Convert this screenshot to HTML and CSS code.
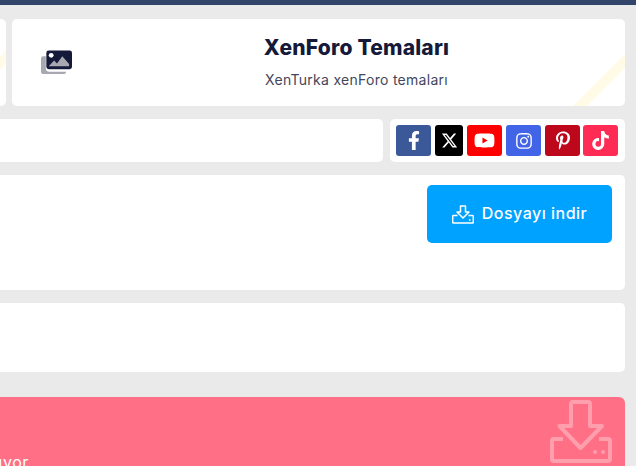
FILE: index.html
```html
<!DOCTYPE html>
<html lang="tr">
<head>
<meta charset="utf-8">
<title>XenForo Temaları</title>
<link rel="stylesheet" href="styles.css">
</head>
<body>
<div class="topbar"></div>
<main class="page">
  <section class="row row-head">
    <div class="card stub">
      <svg class="stripe" viewBox="0 0 6 87" aria-hidden="true"><polygon points="0,38 6,31 6,44 0,51" fill="#fffbe6"/></svg>
    </div>
    <div class="card head">
      <svg class="stripe" viewBox="0 0 613 87" aria-hidden="true"><polygon points="561,87 613,35 613,49 575,87" fill="#fffbe6"/></svg>
      <svg class="head-icon" width="31" height="25" viewBox="0 0 32 26" preserveAspectRatio="none" aria-hidden="true">
        <path d="M2.5 6.5H5V19a3.5 3.5 0 0 0 3.5 3.5H26a2.5 2.5 0 0 1-2.5 2.5H3a3 3 0 0 1-3-3V9a2.500 2.500 0 0 1 2.500-2.500z" fill="#a7a8b1"/>
        <rect x="5.500" y="0.500" width="26.500" height="19.500" rx="2.500" fill="#15193a"/>
        <circle cx="10.500" cy="5.500" r="2.500" fill="#fff"/>
        <path d="M8 17l5.500-6 3 3 5.500-7.500 7 8V17z" fill="#a7a8b1"/>
      </svg>
      <div class="head-text">
        <h1 class="head-title">XenForo Temaları</h1>
        <p class="head-sub">XenTurka xenForo temaları</p>
      </div>
    </div>
  </section>

  <section class="row row-social">
    <div class="card search"></div>
    <nav class="card social">
      <a class="soc soc-fb"><svg viewBox="0 0 320 512" width="12" height="19"><path fill="#fff" d="M279.14 288l14.22-92.66h-88.91v-60.13c0-25.35 12.42-50.06 52.24-50.06h40.42V6.26S260.43 0 225.36 0c-73.22 0-121.08 44.38-121.08 124.72v70.62H22.89V288h81.39v224h100.17V288z"/></svg></a>
      <a class="soc soc-x"><svg viewBox="0 0 512 512" width="17" height="17"><path fill="#fff" d="M389.2 48h70.6L305.6 224.2 487 464H345L233.7 318.6 106.5 464H35.8L200.7 275.5 26.800 48H172.400L272.900 180.900 389.200 48zM364.400 421.800h39.100L151.100 88h-42L364.400 421.800z"/></svg></a>
      <a class="soc soc-yt"><svg viewBox="0 0 576 512" width="21" height="19"><path fill="#fff" d="M549.655 124.083c-6.281-23.65-24.787-42.276-48.284-48.597C458.781 64 288 64 288 64S117.22 64 74.629 75.486c-23.497 6.322-42.003 24.947-48.284 48.597-11.412 42.867-11.412 132.305-11.412 132.305s0 89.438 11.412 132.305c6.281 23.65 24.787 41.5 48.284 47.821C117.22 448 288 448 288 448s170.78 0 213.371-11.486c23.497-6.321 42.003-24.171 48.284-47.821 11.412-42.867 11.412-132.305 11.412-132.305s0-89.438-11.412-132.305zm-317.51 213.508V175.185l142.739 81.205-142.739 81.201z"/></svg></a>
      <a class="soc soc-ig"><svg viewBox="0 0 448 512" width="16" height="18"><path fill="#fff" d="M224.1 141c-63.6 0-114.9 51.3-114.9 114.9s51.3 114.9 114.9 114.9S339 319.5 339 255.9 287.7 141 224.1 141zm0 189.6c-41.1 0-74.7-33.5-74.7-74.7s33.5-74.7 74.7-74.7 74.7 33.5 74.7 74.7-33.6 74.7-74.7 74.7zm146.4-194.3c0 14.9-12 26.8-26.8 26.8-14.9 0-26.8-12-26.8-26.8s12-26.8 26.8-26.8 26.8 12 26.8 26.8zm76.1 27.2c-1.7-35.9-9.9-67.7-36.2-93.9-26.2-26.2-58-34.4-93.9-36.2-37-2.1-147.9-2.1-184.9 0-35.8 1.7-67.6 9.9-93.9 36.1s-34.4 58-36.2 93.9c-2.1 37-2.1 147.9 0 184.9 1.7 35.9 9.9 67.7 36.2 93.9s58 34.4 93.9 36.2c37 2.1 147.9 2.1 184.9 0 35.9-1.7 67.7-9.9 93.9-36.2 26.2-26.2 34.4-58 36.2-93.9 2.1-37 2.1-147.8 0-184.8zM398.8 388c-7.8 19.6-22.9 34.7-42.6 42.6-29.5 11.7-99.5 9-132.1 9s-102.7 2.6-132.1-9c-19.6-7.8-34.7-22.9-42.6-42.6-11.7-29.5-9-99.5-9-132.1s-2.6-102.7 9-132.1c7.8-19.6 22.9-34.7 42.6-42.6 29.5-11.7 99.5-9 132.1-9s102.7-2.6 132.1 9c19.6 7.8 34.7 22.9 42.6 42.6 11.7 29.5 9 99.5 9 132.1s2.7 102.7-9 132.1z"/></svg></a>
      <a class="soc soc-pin"><svg viewBox="0 0 384 512" width="14" height="19"><path fill="#fff" d="M204 6.5C101.4 6.5 0 74.9 0 185.6 0 256 39.6 296 63.6 296c9.9 0 15.6-27.6 15.6-35.4 0-9.3-23.7-29.1-23.7-67.8 0-80.4 61.2-137.4 140.4-137.4 68.1 0 118.5 38.7 118.5 109.8 0 53.1-21.3 152.7-90.3 152.7-24.9 0-46.2-18-46.2-43.8 0-37.8 26.4-74.4 26.4-113.4 0-66.2-93.9-54.2-93.9 25.8 0 16.8 2.1 35.4 9.6 50.7-13.8 59.4-42 147.9-42 209.1 0 18.9 2.7 37.5 4.5 56.4 3.4 3.8 1.7 3.4 6.9 1.5 50.4-69 48.6-82.5 71.4-172.8 12.3 23.4 44.1 36 69.3 36 106.2 0 153.9-103.5 153.9-196.8C384 71.3 298.2 6.500 204 6.500z"/></svg></a>
      <a class="soc soc-tt"><svg viewBox="0 0 448 512" width="17" height="19"><path fill="#fff" d="M448,209.91a210.06,210.06,0,0,1-122.77-39.25V349.38A162.55,162.55,0,1,1,185,188.31V278.2a74.62,74.62,0,1,0,52.23,71.18V0l88,0a121.18,121.18,0,0,0,1.86,22.17h0A122.18,122.18,0,0,0,381,102.39a121.43,121.43,0,0,0,67,20.14Z"/></svg></a>
    </nav>
  </section>

  <section class="card download">
    <a class="dl-btn">
      <svg class="dl-icon" width="22" height="19" viewBox="0 0 22 19" fill="none" stroke="#fff" stroke-width="1.500" stroke-linejoin="round" aria-hidden="true">
        <path d="M8.500 1h5v6h3.500L11 13 5 7h3.500z"/>
        <path d="M5.500 10.500H1.500a.8.800 0 0 0-.8.800v6a.8.800 0 0 0 .8.800h19a.8.800 0 0 0 .8-.800v-6a.8.800 0 0 0-.8-.800h-4"/>
        <path d="M17 15h1.500"/>
      </svg>
      <span class="dl-label">Dosyayı indir</span>
    </a>
  </section>

  <section class="card empty"></section>

  <section class="promo">
    <p class="promo-text">uyor</p>
    <svg class="promo-icon" width="62" height="63" viewBox="0 0 62 63" fill="none" stroke="#fff" stroke-opacity=".32" stroke-width="4" stroke-linejoin="round" aria-hidden="true">
      <path d="M23 2h15a2 2 0 0 1 2 2v22h12l-21.500 22L9.500 26H21V4a2 2 0 0 1 2-2z"/>
      <path d="M13 39H4a2 2 0 0 0-2 2v18a2 2 0 0 0 2 2h54a2 2 0 0 0 2-2V41a2 2 0 0 0-2-2H49"/>
      <circle cx="45" cy="52" r="2" fill="#fff" fill-opacity=".32" stroke="none"/>
      <circle cx="53" cy="52" r="2" fill="#fff" fill-opacity=".32" stroke="none"/>
    </svg>
  </section>
</main>
</body>
</html>
```

FILE: styles.css
```css
* { box-sizing: border-box; }

html, body {
  margin: 0;
  height: 466px;
  overflow: hidden;
}

body {
  background: #eaeaea;
  font-family: "Inter", "Open Sans", sans-serif;
  color: #15193a;
}

.topbar {
  height: 5px;
  background: #304569;
}

.page {
  display: flex;
  flex-direction: column;
  padding: 14px 11px 0 0;
}

.card {
  position: relative;
  background: #fff;
  border-radius: 5px;
  overflow: hidden;
}

.row {
  display: flex;
}

.row-head {
  gap: 6px;
  height: 87px;
}

.stub {
  width: 6px;
  border-radius: 0 5px 5px 0;
}

.stripe {
  position: absolute;
  inset: 0;
  width: 100%;
  height: 100%;
}

.head {
  flex: 1;
  display: flex;
  align-items: center;
  padding-left: 29px;
}

.head-icon {
  position: relative;
  flex: none;
}

.head-text {
  position: relative;
  flex: 1;
  text-align: center;
  padding-left: 16px;
}

.head-title {
  margin: 0;
  font-size: 21px;
  line-height: 26px;
  font-weight: 800;
  letter-spacing: .2px;
}

.head-sub {
  margin: 9px 0 0;
  font-size: 14px;
  line-height: 20px;
  letter-spacing: .28px;
  color: #43465c;
}

.row-social {
  gap: 7px;
  height: 43px;
  margin-top: 13px;
}

.search {
  flex: 1;
  border-radius: 0 5px 5px 0;
}

.social {
  display: flex;
  gap: 4px;
  width: 235px;
  padding: 6px 7px 6px 6px;
}

.soc {
  display: flex;
  align-items: center;
  justify-content: center;
  flex: none;
  width: 35px;
  height: 31px;
  border-radius: 3px;
}

.soc-fb { background: #3b5998; }
.soc-x { background: #000; width: 28px; }
.soc-yt { background: #f00; }
.soc-ig { background: #4264e6; }
.soc-pin { background: #bd081c; }
.soc-tt { background: #fe2c55; margin-left: -1px; }

.download {
  display: flex;
  justify-content: flex-end;
  height: 115px;
  margin-top: 13px;
  padding: 10px 13px;
  border-radius: 0 5px 5px 0;
}

.dl-btn {
  display: flex;
  align-items: center;
  justify-content: center;
  gap: 8px;
  width: 185px;
  height: 58px;
  border-radius: 5px;
  background: #00a2ff;
  color: #fff;
  font-size: 16px;
  font-weight: 500;
  letter-spacing: .5px;
}

.dl-label {
  padding-bottom: 2px;
}

.empty {
  height: 69px;
  margin-top: 13px;
  border-radius: 0 5px 5px 0;
}

.promo {
  position: relative;
  display: flex;
  height: 80px;
  margin-top: 25px;
  background: #ff7086;
  border-radius: 0 6px 0 0;
  overflow: hidden;
}

.promo-text {
  width: 29px;
  margin: 54px 0 0;
  font-size: 16px;
  line-height: 22px;
  letter-spacing: .6px;
  color: #fff;
  text-align: right;
  white-space: nowrap;
  direction: rtl;
}

.promo-icon {
  position: absolute;
  top: 3px;
  right: 13px;
}
```
